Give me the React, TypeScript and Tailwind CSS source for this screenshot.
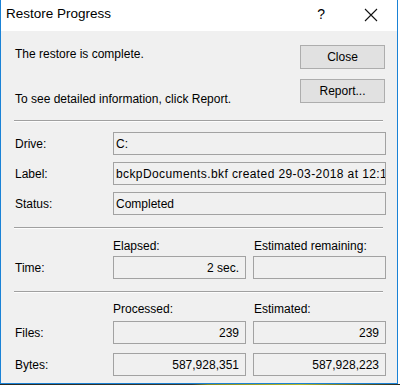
import type { ReactNode } from "react";

const font = { fontFamily: '"Liberation Sans", Arial, sans-serif' };

function Field({ children, align = "left", className = "" }: { children?: ReactNode; align?: "left" | "right"; className?: string }) {
  return (
    <div
      className={`flex h-[23px] min-w-0 items-center overflow-hidden whitespace-nowrap border border-[#a2a2a2] bg-[#f0f0f0] text-[12px] text-black ${
        align === "right" ? "justify-end pr-[6px]" : "pl-[2px]"
      } ${className}`}
    >
      {children}
    </div>
  );
}

function Separator() {
  return (
    <div className="ml-[-1px] mr-[3px]">
      <div className="h-px bg-[#a0a0a0]" />
      <div className="h-px bg-[#fdfdfd]" />
    </div>
  );
}

function Row({ label, children }: { label: string; children: ReactNode }) {
  return (
    <div className="flex items-center">
      <div className="w-[98px] shrink-0 text-[12px] text-black">{label}</div>
      <div className="flex min-w-0 flex-1 gap-[7px]">{children}</div>
    </div>
  );
}

function Button({ children }: { children: ReactNode }) {
  return (
    <button
      type="button"
      className="flex h-[24px] w-[85px] items-center justify-center border border-[#adadad] bg-[#e1e1e1] text-[12px] text-black"
    >
      {children}
    </button>
  );
}

export default function App() {
  return (
    <div className="relative h-[385px] w-[400px] bg-white" style={font}>
      <div className="flex h-[384px] w-[398px] flex-col border-x border-b border-[#1a82d6] bg-[#f0f0f0]">
        {/* title bar */}
        <div className="flex h-[31px] shrink-0 items-center bg-white">
          <span className="ml-[5px] pb-[2px] text-[13.5px] text-black">Restore Progress</span>
          <span className="ml-auto pb-[2px] text-[14px] text-black">?</span>
          <svg width="14" height="14" viewBox="0 0 14 14" className="ml-[39px] mr-[19px] mb-[2px]">
            <path d="M1 1 L13 13 M13 1 L1 13" stroke="#111" strokeWidth="1.1" fill="none" />
          </svg>
        </div>

        {/* body */}
        <div className="flex flex-1 flex-col pl-[14px] pr-[11px]">
          <div className="flex">
            <div className="flex-1 text-[12px] leading-[16px] text-black">
              <p className="mt-[15px]">The restore is complete.</p>
              <p className="mt-[29px]">To see detailed information, click Report.</p>
            </div>
            <div className="mr-px mt-[14px] flex flex-col gap-[10px]">
              <Button>Close</Button>
              <Button>Report...</Button>
            </div>
          </div>

          <div className="mt-[13px]">
            <Separator />
          </div>

          <div className="mt-[10px] flex flex-col gap-[7px]">
            <Row label="Drive:">
              <Field className="flex-1">C:</Field>
            </Row>
            <Row label="Label:">
              <Field className="flex-1 tracking-[0.4px]">bckpDocuments.bkf created 29-03-2018 at 12:15 PM</Field>
            </Row>
            <Row label="Status:">
              <Field className="flex-1">Completed</Field>
            </Row>
          </div>

          <div className="mt-[12px]">
            <Separator />
          </div>

          <div className="mt-[9px] flex text-[12px] leading-[16px] text-black">
            <div className="ml-[98px] w-[134px]">Elapsed:</div>
            <div className="ml-[7px]">Estimated remaining:</div>
          </div>
          <div className="mt-[2px]">
            <Row label="Time:">
              <Field align="right" className="w-[134px]">2 sec.</Field>
              <Field className="w-[134px]" />
            </Row>
          </div>

          <div className="mt-[12px]">
            <Separator />
          </div>

          <div className="mt-[8px] flex text-[12px] leading-[16px] text-black">
            <div className="ml-[98px] w-[134px]">Processed:</div>
            <div className="ml-[7px]">Estimated:</div>
          </div>
          <div className="mt-[4px] flex flex-col gap-[9px]">
            <Row label="Files:">
              <Field align="right" className="w-[134px]">239</Field>
              <Field align="right" className="w-[134px]">239</Field>
            </Row>
            <Row label="Bytes:">
              <Field align="right" className="w-[134px]">587,928,351</Field>
              <Field align="right" className="w-[134px]">587,928,223</Field>
            </Row>
          </div>
        </div>
      </div>
      <div className="h-px w-full bg-[linear-gradient(90deg,#2a2a22_0%,#3a3a30_48%,#8a8a20_52%,#b5b52a_75%,#2a2a22_100%)]" />
    </div>
  );
}
